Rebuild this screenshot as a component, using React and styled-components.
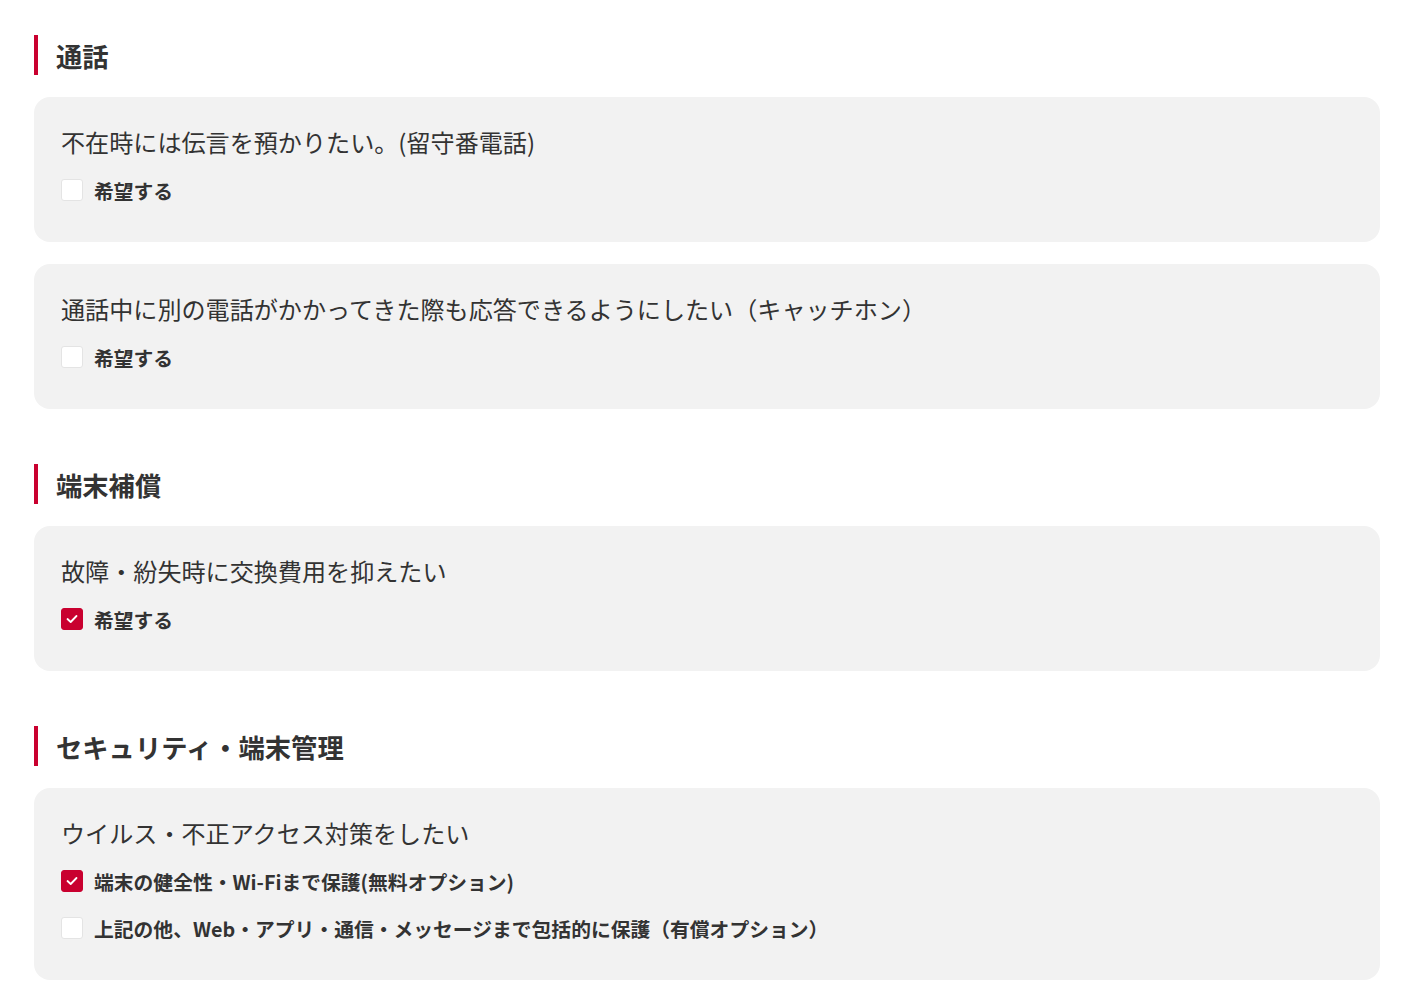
import React, { useState } from 'react';
import styled, { createGlobalStyle } from 'styled-components';

const accent = '#c9002f';
const textColor = '#333333';

const GlobalStyle = createGlobalStyle`
  html, body {
    margin: 0;
    padding: 0;
    background: #ffffff;
  }
  body {
    font-family: "Noto Sans CJK JP", "Noto Sans", sans-serif;
    color: ${textColor};
  }
`;

const Page = styled.div`
  padding: 35px 32px 20px 34px;
  display: flex;
  flex-direction: column;
`;

const Section = styled.section`
  display: flex;
  flex-direction: column;
  gap: 22px;
  & + & {
    margin-top: 55px;
  }
`;

const Heading = styled.h2`
  margin: 0;
  box-sizing: border-box;
  height: 40px;
  padding: 3px 0 0 18px;
  display: flex;
  align-items: center;
  border-left: 4px solid ${accent};
  font-size: 26.3px;
  font-weight: 700;
  line-height: 1;
  color: ${textColor};
`;

const Card = styled.div`
  background: #f2f2f2;
  border-radius: 16px;
  padding: 27px 27px 41px;
  display: flex;
  flex-direction: column;
`;

const Question = styled.p`
  margin: 0 0 19px;
  font-size: 24.1px;
  line-height: 36px;
  font-weight: 400;
  color: ${textColor};
`;

const Options = styled.div`
  display: flex;
  flex-direction: column;
  gap: 25px;
`;

const OptionLabel = styled.label`
  display: flex;
  align-items: center;
  gap: 11px;
  height: 22px;
  font-size: 19.8px;
  font-weight: 700;
  color: ${textColor};
  cursor: pointer;
`;

const Box = styled.span`
  width: 22px;
  height: 22px;
  flex: none;
  box-sizing: border-box;
  border-radius: 3px;
  background: ${(p) => (p.$checked ? accent : '#ffffff')};
  border: 1px solid ${(p) => (p.$checked ? accent : '#e4e4e4')};
  display: flex;
  align-items: center;
  justify-content: center;
`;

const Check = () => (
  <svg width="12" height="10" viewBox="0 0 12 10" fill="none">
    <path d="M1.5 5 L4.7 8 L10.5 2" stroke="#fff" strokeWidth="1.8" strokeLinecap="round" strokeLinejoin="round" />
  </svg>
);

const Option = ({ label, initial }) => {
  const [checked, setChecked] = useState(initial);
  return (
    <OptionLabel onClick={() => setChecked(!checked)}>
      <Box $checked={checked}>{checked && <Check />}</Box>
      {label}
    </OptionLabel>
  );
};

const sections = [
  {
    title: '通話',
    cards: [
      { q: '不在時には伝言を預かりたい。(留守番電話)', options: [{ label: '希望する', checked: false }] },
      {
        q: '通話中に別の電話がかかってきた際も応答できるようにしたい（キャッチホン）',
        options: [{ label: '希望する', checked: false }],
      },
    ],
  },
  {
    title: '端末補償',
    cards: [{ q: '故障・紛失時に交換費用を抑えたい', options: [{ label: '希望する', checked: true }] }],
  },
  {
    title: 'セキュリティ・端末管理',
    cards: [
      {
        q: 'ウイルス・不正アクセス対策をしたい',
        options: [
          { label: '端末の健全性・Wi-Fiまで保護(無料オプション)', checked: true },
          { label: '上記の他、Web・アプリ・通信・メッセージまで包括的に保護（有償オプション）', checked: false },
        ],
      },
    ],
  },
];

const App = () => (
  <>
    <GlobalStyle />
    <Page>
      {sections.map((s) => (
        <Section key={s.title}>
          <Heading>{s.title}</Heading>
          {s.cards.map((c) => (
            <Card key={c.q}>
              <Question>{c.q}</Question>
              <Options>
                {c.options.map((o) => (
                  <Option key={o.label} label={o.label} initial={o.checked} />
                ))}
              </Options>
            </Card>
          ))}
        </Section>
      ))}
    </Page>
  </>
);

export default App;
